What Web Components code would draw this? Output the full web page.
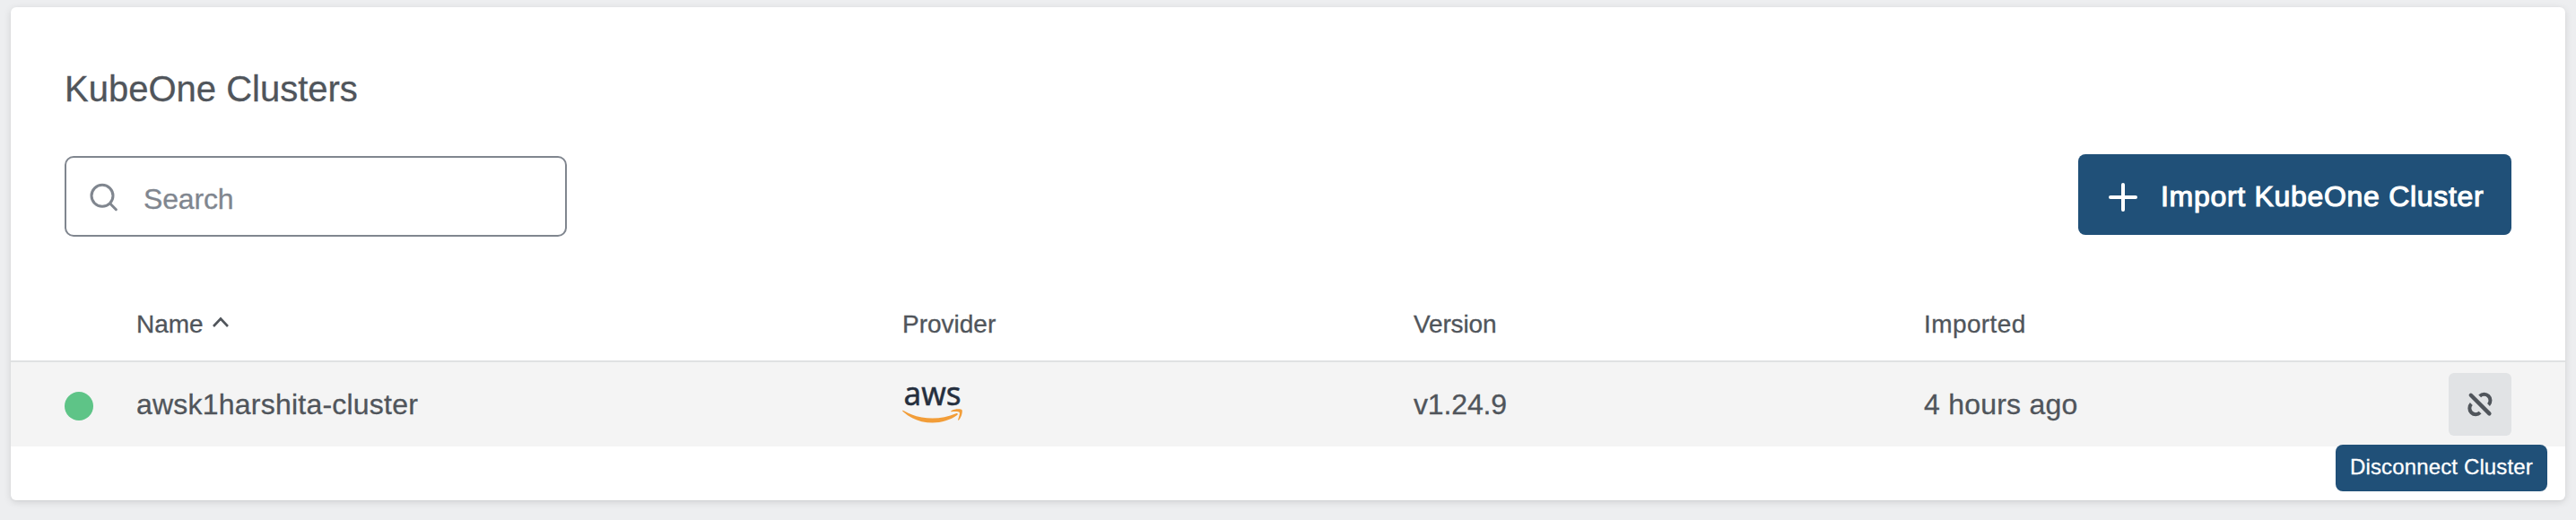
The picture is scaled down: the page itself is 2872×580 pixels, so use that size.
<!DOCTYPE html>
<html lang="en">
<head>
<meta charset="utf-8">
<title>KubeOne Clusters</title>
<style>
html, body { margin: 0; height: 100%; }
body { background: #edeef0; font-family: "Liberation Sans", Arial, sans-serif; color: #50555b; overflow: hidden; -webkit-text-stroke: .3px currentColor; }
</style>
</head>
<body>
<kube-card>
  <span slot="title">KubeOne Clusters</span>
  <kube-search slot="tools">Search</kube-search>
  <kube-button slot="tools">Import KubeOne Cluster</kube-button>
  <kube-table></kube-table>
</kube-card>
<script>
function define(name, html) {
  customElements.define(name, class extends HTMLElement {
    constructor() {
      super();
      this.attachShadow({ mode: "open" }).innerHTML = html;
    }
  });
}

define("kube-card", `
<style>
:host { display: block; box-sizing: border-box; height: 580px; padding: 8px 12px 22px; }
section { height: 550px; box-sizing: border-box; background: #fff; border-radius: 6px; box-shadow: 0 2px 8px rgba(0,0,0,.12), 0 1px 2px rgba(0,0,0,.04); }
h1 { margin: 0; padding: 67px 60px 0 60px; font-size: 40px; line-height: 48px; font-weight: 400; color: #50555b; }
.tools { display: flex; justify-content: space-between; align-items: flex-start; height: 90px; padding: 49px 60px 0; }
</style>
<section>
  <h1><slot name="title"></slot></h1>
  <div class="tools"><slot name="tools"></slot></div>
  <slot></slot>
</section>`);

define("kube-search", `
<style>
:host { display: flex; align-items: center; box-sizing: border-box; width: 560px; height: 90px; margin-top: 2px; padding-left: 26px; border: 2px solid #80868f; border-radius: 10px; color: #80868f; font-size: 32px; line-height: 36px; letter-spacing: -.15px; -webkit-text-stroke: .3px #80868f; }
svg { margin: 1px 28px 0 0; flex: none; }
span { padding-top: 5px; }
</style>
<svg width="32" height="32" viewBox="0 0 32 32" fill="none" stroke="currentColor" stroke-width="3" stroke-linecap="round"><circle cx="14" cy="14.3" r="12"/><path d="M22.7 23 29.4 29.7"/></svg>
<span><slot></slot></span>`);

define("kube-button", `
<style>
:host { display: flex; align-items: center; box-sizing: border-box; width: 483px; height: 90px; padding-left: 34px; border-radius: 8px; background: #205078; color: #fff; font-size: 32px; line-height: 36px; letter-spacing: .7px; -webkit-text-stroke: 1.1px #fff; white-space: nowrap; }
svg { margin: 6px 26px 0 0; flex: none; }
span { padding-top: 4px; }
</style>
<svg width="32" height="32" viewBox="0 0 32 32" fill="none" stroke="currentColor" stroke-width="4" stroke-linecap="round"><path d="M16 2v28M2 16h28"/></svg>
<span><slot></slot></span>`);

define("kube-aws", `
<style>:host { display: block; height: 48px; -webkit-text-stroke: 0; } svg { display: block; overflow: visible; } text { stroke: #252f3e; stroke-width: .5px; }</style>
<svg width="70" height="48" viewBox="0 0 70 48">
  <text x="1.500" y="25" font-family="Noto Sans, sans-serif" font-size="37" font-weight="400" fill="#252f3e" textLength="64" lengthAdjust="spacingAndGlyphs">aws</text>
  <path fill="#f29d38" transform="translate(0 -1.500)" d="M.4 33.2c-.6-.8.1-1.2.9-.7C19.500 43 41.500 43.500 59.800 35.700c1.600-.7 2.800.8 1.300 1.900C44.500 49.700 17.500 49.300.4 33.200z"/>
  <path fill="#f29d38" transform="translate(0 -1.500)" d="M54.700 33.800c-.6.1-.7-.6-.1-1 3.600-2.500 11-2.300 11.900-1.100.9 1.100-.3 8.200-3.500 11.200-.6.500-1.200.2-.9-.5 1-2.500 2.300-6.700 1.600-7.900-.7-1.200-6-.9-9-.7z"/>
</svg>`);

define("kube-tooltip", `
<style>
:host { position: absolute; top: 80px; right: -40px; box-sizing: border-box; width: 236px; height: 52px; padding: 11px 0 0 16px; border-radius: 8px; background: #205078; color: #fff; font-size: 24px; line-height: 28px; letter-spacing: .14px; white-space: nowrap; -webkit-text-stroke: .3px #fff; }
</style><slot></slot>`);

define("kube-action", `
<style>
:host { position: relative; display: flex; align-items: center; justify-content: center; width: 70px; height: 70px; border-radius: 6px; background: #e1e3e5; color: #50555b; }
</style>
<svg width="32" height="32" viewBox="0 0 32 32" fill="none" stroke="currentColor" stroke-width="4"><path stroke-linecap="round" stroke-width="4.400" d="M5.800 5.800 26.400 26.400"/><path d="M15.700 6.900A6.800 6.800 0 0 1 25.500 16.500M6.300 15.500A6.800 6.800 0 0 0 16.100 25.100"/></svg>
<kube-tooltip><slot></slot></kube-tooltip>`);

define("kube-table", `
<style>
:host { display: block; margin-top: 51px; }
.row { display: grid; grid-template-columns: 140px 854px 570px 569px 585px 70px; align-items: center; }
.head { height: 89px; border-bottom: 2px solid #e0e1e2; font-size: 28px; line-height: 32px; }
.head > * { padding-top: 8px; }
.body { height: 94px; background: #f4f4f4; font-size: 32px; line-height: 36px; }
.dot { width: 32px; height: 32px; margin: 4px 0 0 60px; border-radius: 50%; background: #5ec487; }
.name { display: flex; align-items: center; }
.name svg { margin: -5px 0 0 10px; }
.t { margin-top: -1px; letter-spacing: .22px; }
.ver { letter-spacing: -.15px; }
.imp { letter-spacing: .4px; }
</style>
<div class="row head">
  <span></span>
  <span class="name">Name<svg width="18" height="12" viewBox="0 0 18 12" fill="none" stroke="currentColor" stroke-width="2.600"><path d="M1 11 9 2.500 17 11"/></svg></span>
  <span>Provider</span><span class="ver">Version</span><span class="imp">Imported</span><span></span>
</div>
<div class="row body">
  <span class="dot"></span><span class="t">awsk1harshita-cluster</span><kube-aws></kube-aws><span class="t ver">v1.24.9</span><span class="t">4 hours ago</span>
  <kube-action>Disconnect Cluster</kube-action>
</div>`);
</script>
</body>
</html>
